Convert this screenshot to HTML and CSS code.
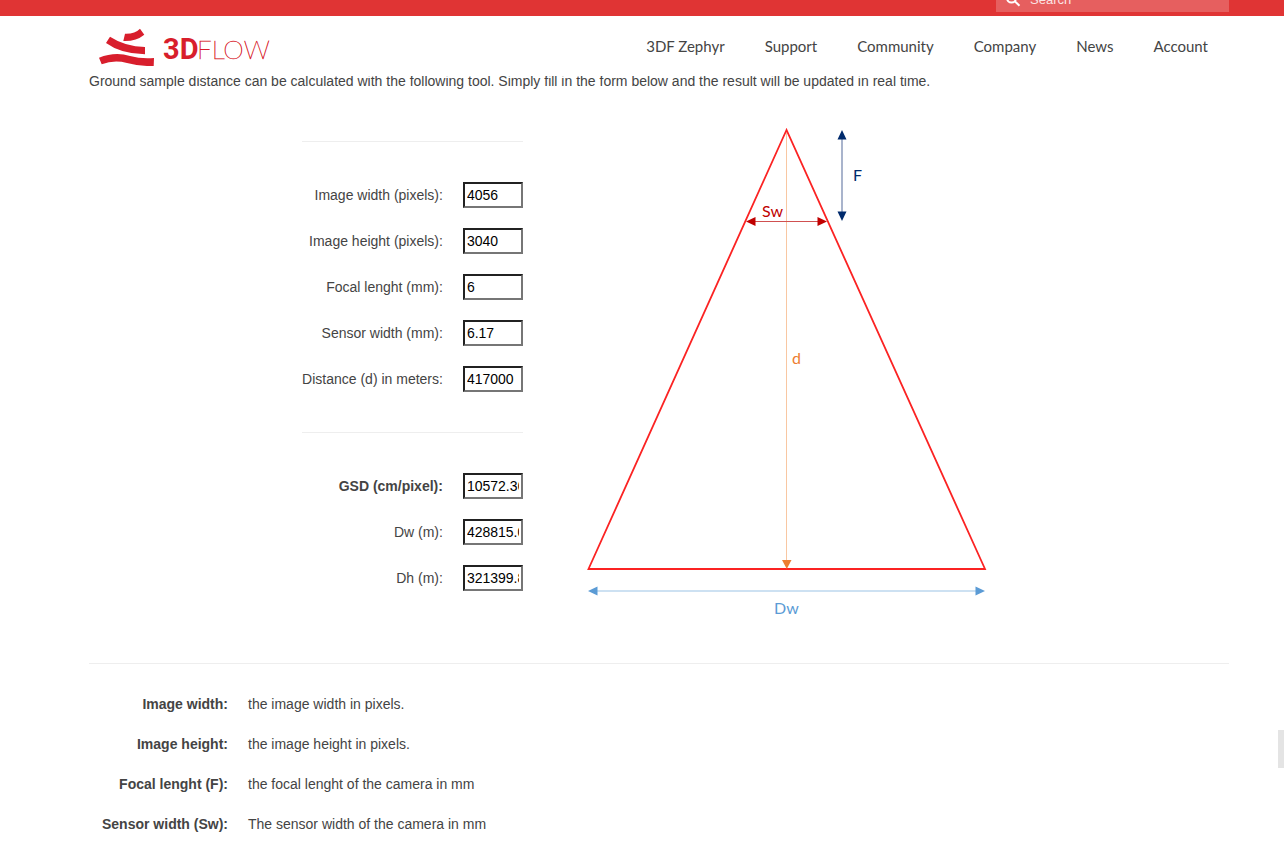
FILE: index.html
```html
<!DOCTYPE html>
<html lang="en">
<head>
<meta charset="utf-8">
<meta name="viewport" content="width=device-width, initial-scale=1">
<title>Ground sample distance calculator - 3DFlow</title>
<link rel="stylesheet" href="styles.css">
</head>
<body>
<header class="header">
  <div class="topbar">
    <form class="search" role="search">
      <svg class="search-icon" viewBox="0 0 16 16" aria-hidden="true"><circle cx="5.500" cy="6" r="4.500"/><path d="M8.800 9.200 13.500 13.800"/></svg>
      <input class="search-input" type="search" placeholder="Search" aria-label="Search">
    </form>
  </div>
  <div class="mainbar">
    <a class="logo" href="#" aria-label="3DFlow">
      <svg class="logo-art" viewBox="0 -2 182 40" aria-hidden="true">
        <path class="logo-mark" d="M26 5.700Q36 6 41 0.700L45.300 6.700Q37 13.500 24.300 13ZM11 8.700Q26 18.500 46 19V26.300Q22 26 7 15ZM0 29.700Q16 23.500 31 28 42 31 55 30L54.700 38Q41 38.500 28 35 15 31.500 2.700 36.300Z"/>
        <text y="31"><tspan class="logo-bold" x="64">3D</tspan><tspan class="logo-thin" x="98">FLOW</tspan></text>
      </svg>
    </a>
    <nav class="nav">
      <a href="#">3DF Zephyr</a>
      <a href="#">Support</a>
      <a href="#">Community</a>
      <a href="#">Company</a>
      <a href="#">News</a>
      <a href="#">Account</a>
    </nav>
  </div>
</header>
<main class="content">
  <p class="intro">Ground sample distance can be calculated with the following tool. Simply fill in the form below and the result will be updated in real time.</p>
  <section class="calculator">
    <form class="calc-form">
      <hr class="rule">
      <div class="fields">
        <label for="iw">Image width (pixels):</label><input id="iw" type="text" value="4056">
        <label for="ih">Image height (pixels):</label><input id="ih" type="text" value="3040">
        <label for="fl">Focal lenght (mm):</label><input id="fl" type="text" value="6">
        <label for="sw">Sensor width (mm):</label><input id="sw" type="text" value="6.17">
        <label for="dist">Distance (d) in meters:</label><input id="dist" type="text" value="417000">
      </div>
      <hr class="rule">
      <div class="fields">
        <label for="gsd"><strong>GSD (cm/pixel):</strong></label><input id="gsd" type="text" value="10572.3663">
        <label for="dw">Dw (m):</label><input id="dw" type="text" value="428815.04">
        <label for="dh">Dh (m):</label><input id="dh" type="text" value="321399.86">
      </div>
    </form>
    <svg class="diagram" viewBox="0 0 473 532" role="img" aria-label="Field of view diagram">
      <path class="axis" d="M243.500 22V450"/>
      <path class="cone" d="M243.500 19 45.500 458H442Z"/>
      <path class="fill-d" d="M239 449H248.500L243.800 458Z"/>
      <path class="line-sw" d="M208 110.500H280"/>
      <path class="fill-sw" d="M203 110.500 212.500 106V115ZM284 110.500 274.500 106V115Z"/>
      <path class="line-f" d="M299 27V102"/>
      <path class="fill-f" d="M299 19 303.500 28.500H294.500ZM299 110 303.500 100.500H294.500Z"/>
      <path class="line-dw" d="M53 480H434"/>
      <path class="fill-dw" d="M45 480 54.500 475.500V484.500ZM442 480 432.500 475.500V484.500Z"/>
      <text class="fill-sw" x="219" y="106">Sw</text>
      <text class="fill-f" x="310" y="70">F</text>
      <text class="fill-d" x="249" y="253">d</text>
      <text class="fill-dw" x="231" y="503">Dw</text>
    </svg>
  </section>
  <hr class="rule">
  <dl class="terms">
    <dt>Image width:</dt><dd>the image width in pixels.</dd>
    <dt>Image height:</dt><dd>the image height in pixels.</dd>
    <dt>Focal lenght (F):</dt><dd>the focal lenght of the camera in mm</dd>
    <dt>Sensor width (Sw):</dt><dd>The sensor width of the camera in mm</dd>
  </dl>
</main>
<div class="scroll-thumb"></div>
</body>
</html>
```

FILE: styles.css
```css
* { box-sizing: border-box; }
body {
  margin: 0;
  background: #fff;
  color: #444;
  font: 14px/20px "Liberation Sans", Arial, sans-serif;
}
.header {
  position: sticky;
  top: 0;
  z-index: 2;
  background: #fff;
}
.topbar {
  display: flex;
  justify-content: flex-end;
  align-items: flex-end;
  height: 16px;
  padding: 0 55px 4px 89px;
  background: #e03434;
  overflow: hidden;
}
.search {
  display: flex;
  flex-shrink: 0;
  align-items: center;
  gap: 8px;
  width: 233px;
  height: 24px;
  padding-left: 10px;
  background: #e65f5f;
}
.search-icon {
  flex-shrink: 0;
  width: 16px;
  height: 16px;
  fill: none;
  stroke: #fff;
  stroke-width: 2;
}
.search-input {
  flex: 1;
  min-width: 0;
  height: 24px;
  padding: 0;
  border: 0;
  background: transparent;
  color: #fff;
  font: 13px/24px "Liberation Sans", Arial, sans-serif;
}
.search-input::placeholder { color: #fbe4e4; }
.mainbar {
  display: flex;
  justify-content: space-between;
  align-items: center;
  height: 60px;
  padding: 0 76px 0 99px;
}
.logo-art {
  display: block;
  width: 182px;
  height: 40px;
}
.logo-art text { fill: #d81e2c; }
.logo-mark { fill: #d81e2c; }
.logo-bold { font: 700 29px Roboto, sans-serif; }
.logo-thin {
  font: 100 26px Lato, sans-serif;
  stroke: #d81e2c;
  stroke-width: 0.5;
}
.nav {
  display: flex;
  gap: 40px;
}
.nav a {
  color: #444;
  font: 15px/20px Lato, sans-serif;
  text-decoration: none;
}
.content {
  margin-top: -5px;
  padding: 0 55px 0 89px;
}
.intro { margin: 0 0 20px; }
.rule {
  margin: 0;
  border: 0;
  border-top: 1px solid #eee;
}
.calculator {
  display: flex;
  justify-content: center;
  gap: 20px;
  margin-bottom: 20px;
}
.calc-form { padding-top: 30px; }
.fields {
  display: grid;
  grid-template-columns: auto 60px;
  align-items: center;
  gap: 20px;
  padding: 40px 0;
}
.fields label { text-align: right; }
.fields input {
  width: 60px;
  height: 26px;
  padding: 1px 2px;
  border: 2px solid;
  border-color: #212121 #767676 #767676 #212121;
  border-radius: 0;
  background: #fff;
  color: #000;
  font: 14px "Liberation Sans", Arial, sans-serif;
}
.diagram {
  width: 473px;
  height: 532px;
  font: 16px Lato, sans-serif;
}
.cone {
  fill: none;
  stroke: #fb2323;
  stroke-width: 1.8;
}
.axis { stroke: #f8c7a2; }
.fill-d { fill: #ed7d31; }
.line-sw { stroke: #d05050; }
.fill-sw { fill: #c00000; }
.line-f { stroke: #8c9bbb; stroke-width: 1.5; }
.fill-f { fill: #002a6c; }
.line-dw { stroke: #bdd7ee; stroke-width: 1.5; }
.fill-dw { fill: #5b9bd5; }
.terms {
  display: grid;
  grid-template-columns: 139px 1fr;
  gap: 20px;
  margin: 30px 0 0;
}
.terms dt {
  font-weight: bold;
  text-align: right;
}
.terms dd { margin: 0; }
.scroll-thumb {
  position: fixed;
  right: 0;
  top: 730px;
  width: 6px;
  height: 38px;
  background: #e4e4e4;
}
```
